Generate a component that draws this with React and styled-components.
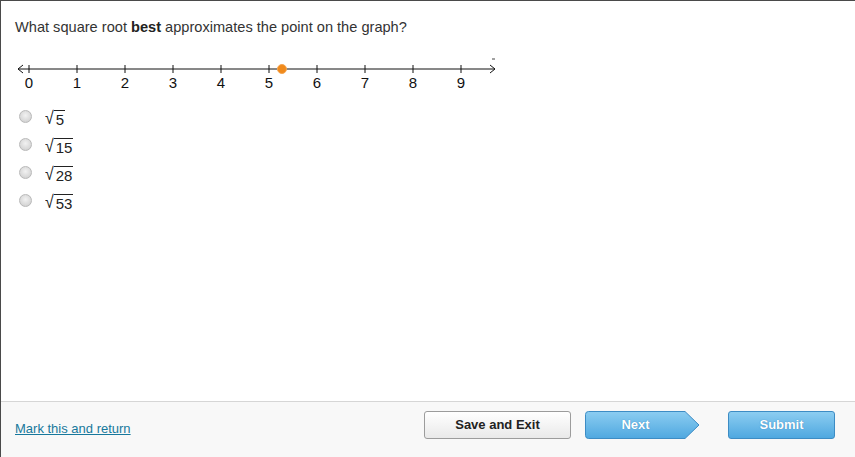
import React from "react";
import styled, { createGlobalStyle } from "styled-components";

const Global = createGlobalStyle`
  html, body { margin: 0; padding: 0; background: #fff; }
  body { font-family: "Liberation Sans", Arial, sans-serif; }
`;

const Page = styled.div`
  width: 855px;
  height: 457px;
  box-sizing: border-box;
  border-top: 1px solid #4a4a4a;
  border-left: 1px solid #4a4a4a;
  display: flex;
  flex-direction: column;
  background: #fff;
`;

const Body = styled.div`
  flex: 1;
  padding: 17px 14px 0;
`;

const Question = styled.div`
  font-size: 14.6px;
  color: #333;
  line-height: 18px;
  b { color: #222; }
`;

const LineWrap = styled.div`
  margin-top: 20px;
  margin-left: 1px;
  height: 40px;
`;

const Choices = styled.div`
  display: flex;
  flex-direction: column;
  gap: 8px;
  margin-top: 14px;
  padding-left: 4px;
`;

const Choice = styled.label`
  display: flex;
  align-items: center;
  gap: 13px;
  height: 20px;
  font-size: 14px;
  color: #222;
`;

const Radio = styled.span`
  width: 11px;
  height: 11px;
  border-radius: 50%;
  border: 1px solid #b9b9b9;
  background: radial-gradient(circle at 50% 40%, #f2f2f2 0%, #d6d6d6 70%, #c8c8c8 100%);
  margin-top: -8px;
`;

const Root = styled.span`
  display: inline-flex;
  align-items: flex-end;
  font-size: 15px;
  line-height: 16px;
  margin-top: -4px;
`;

const RadSign = styled.span`
  font-size: 16px;
  transform: scaleY(1.1);
`;

const Radicand = styled.span`
  border-top: 1px solid #222;
  padding: 1px 1px 0 2px;
  font-size: 15px;
  line-height: 15px;
`;

const Footer = styled.div`
  height: 55px;
  border-top: 1px solid #d6d6d6;
  background: #f8f8f8;
  display: flex;
  align-items: center;
  padding: 0 20px 0 14px;
`;

const Link = styled.a`
  font-size: 13px;
  color: #17789c;
  text-decoration: underline;
  margin-top: -2px;
  cursor: pointer;
`;

const Spacer = styled.div`
  flex: 1;
`;

const Btn = styled.button`
  height: 28px;
  box-sizing: border-box;
  font-family: "Liberation Sans", Arial, sans-serif;
  font-size: 13px;
  font-weight: bold;
  border-radius: 3px;
  cursor: pointer;
  margin-top: -10px;
`;

const SaveBtn = styled(Btn)`
  width: 147px;
  border: 1px solid #9c9c9c;
  background: linear-gradient(#ffffff, #e9e9e9);
  color: #222;
  margin-right: 14px;
`;

const BlueBtn = styled(Btn)`
  border: 1px solid #3d8cc4;
  background: linear-gradient(#8ccdf1, #4fa8e0);
  color: #fff;
  text-shadow: 0 0 1px #2a78b0;
`;

const NextBtn = styled(BlueBtn)`
  width: 115px;
  border: none;
  background: none;
  position: relative;
  padding: 0 14px 0 0;
  margin-right: 28px;
  svg { position: absolute; left: 0; top: 0; }
  span { position: relative; }
`;

const SubmitBtn = styled(BlueBtn)`
  width: 107px;
`;

const NumberLine = () => {
  const x0 = 13;
  const step = 48;
  const ticks = Array.from({ length: 10 }, (_, i) => i);
  return (
    <svg width="490" height="40" viewBox="0 0 490 40">
      <line x1="2" y1="13" x2="479" y2="13" stroke="#111" strokeWidth="1" />
      <polyline points="7,9 2,13 7,17" fill="none" stroke="#111" strokeWidth="1" />
      <polyline points="474,9 479,13 474,17" fill="none" stroke="#111" strokeWidth="1" />
      <line x1="476" y1="3" x2="479" y2="3" stroke="#444" strokeWidth="1" />
      {ticks.map((t) => (
        <g key={t}>
          <line x1={x0 + t * step} y1="9" x2={x0 + t * step} y2="17" stroke="#111" strokeWidth="1" />
          <text
            x={x0 + t * step}
            y="32"
            textAnchor="middle"
            fontSize="15"
            fontFamily="Liberation Sans, Arial, sans-serif"
            fill="#111"
          >
            {t}
          </text>
        </g>
      ))}
      <circle cx={x0 + 5.27 * step} cy="13" r="4.5" fill="#f08a1c" stroke="#f5a550" strokeWidth="1" />
    </svg>
  );
};

const choices = ["5", "15", "28", "53"];

export default function App() {
  return (
    <>
      <Global />
      <Page>
        <Body>
          <Question>
            What square root <b>best</b> approximates the point on the graph?
          </Question>
          <LineWrap>
            <NumberLine />
          </LineWrap>
          <Choices>
            {choices.map((c) => (
              <Choice key={c}>
                <Radio />
                <Root>
                  <RadSign>√</RadSign>
                  <Radicand>{c}</Radicand>
                </Root>
              </Choice>
            ))}
          </Choices>
        </Body>
        <Footer>
          <Link>Mark this and return</Link>
          <Spacer />
          <SaveBtn>Save and Exit</SaveBtn>
          <NextBtn>
            <svg width="115" height="28" viewBox="0 0 115 28">
              <defs>
                <linearGradient id="ng" x1="0" y1="0" x2="0" y2="1">
                  <stop offset="0" stopColor="#8ccdf1" />
                  <stop offset="1" stopColor="#4fa8e0" />
                </linearGradient>
              </defs>
              <path
                d="M3.5 0.5 H100 L114 14 L100 27.5 H3.5 Q0.5 27.5 0.5 24.5 V3.5 Q0.5 0.5 3.5 0.5 Z"
                fill="url(#ng)"
                stroke="#3d8cc4"
              />
            </svg>
            <span>Next</span>
          </NextBtn>
          <SubmitBtn>Submit</SubmitBtn>
        </Footer>
      </Page>
    </>
  );
}
